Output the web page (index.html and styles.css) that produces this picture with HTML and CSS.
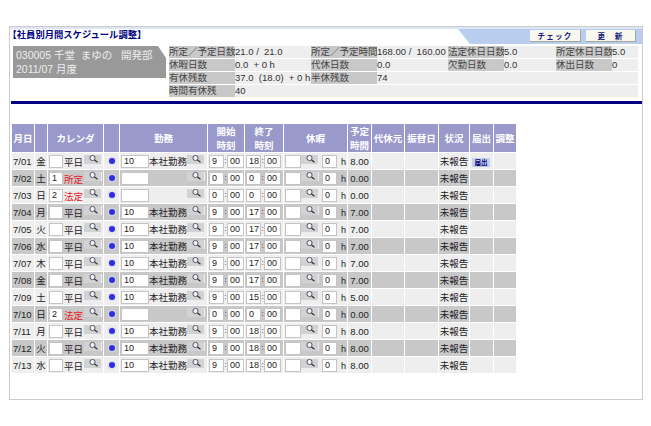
FILE: index.html
```html
<!DOCTYPE html>
<html lang="ja">
<head>
<meta charset="utf-8">
<title>社員別月間スケジュール調整</title>
<link rel="stylesheet" href="styles.css">
</head>
<body>
<svg class="defs" width="0" height="0"><symbol id="mag" viewBox="0 0 18 9"><circle cx="8.5" cy="3" r="2.6" fill="#f2f2fa" stroke="#556"/><path d="M10.5 5l3 2.3" stroke="#333" stroke-width="1.3"/></symbol></svg>
<main class="panel">
  <header class="titlebar">
    <h1 class="title">【社員別月間スケジュール調整】</h1>
    <div class="tools">
      <button class="tool">チェック</button>
      <button class="tool">更　新</button>
    </div>
  </header>
  <section class="summary">
    <div class="person">030005 千堂&nbsp;&nbsp;まゆの&nbsp;&nbsp;&nbsp;開発部<br>2011/07 月度</div>
    <div class="info">
      <span class="k">所定／予定日数</span><span class="v">21.0 /&nbsp; 21.0</span>
      <span class="k">所定／予定時間</span><span class="v">168.00 /&nbsp; 160.00</span>
      <span class="k">法定休日日数</span><span class="v">5.0</span>
      <span class="k">所定休日日数</span><span class="v">5.0</span>
      <span class="k">休暇日数</span><span class="v">0.0&nbsp; + 0 h</span>
      <span class="k">代休日数</span><span class="v">0.0</span>
      <span class="k">欠勤日数</span><span class="v">0.0</span>
      <span class="k">休出日数</span><span class="v">0</span>
      <span class="k">有休残数</span><span class="v">37.0&nbsp; (18.0)&nbsp; + 0 h</span>
      <span class="k">半休残数</span><span class="v">74</span>
      <span class="v wide4"></span>
      <span class="k">時間有休残</span><span class="v">40</span>
      <span class="v wide6"></span>
    </div>
  </section>
  <div class="rule"></div>
  <table class="sched">
    <colgroup>
      <col class="c22"><col class="c12"><col class="c55"><col class="c15"><col class="c87"><col class="c36"><col class="c38"><col class="c63"><col class="c23"><col class="c32"><col class="c33"><col class="c30"><col class="c23"><col class="c22">
    </colgroup>
    <thead>
      <tr><th>月日</th><th></th><th>カレンダ</th><th></th><th>勤務</th><th>開始<br>時刻</th><th>終了<br>時刻</th><th>休暇</th><th>予定<br>時間</th><th>代休元</th><th>振替日</th><th>状況</th><th>届出</th><th>調整</th></tr>
    </thead>
    <tbody>
      <tr><td class="day">7/01</td><td class="ctr">金</td><td><div class="f"><input class="i14" value=""><span class="cal">平日</span><button class="s"><svg><use href="#mag"/></svg></button></div></td><td><div class="dotbox"><i class="dot"></i></div></td><td><div class="f"><input class="i28" value="10"><span class="job">本社勤務</span><button class="s"><svg><use href="#mag"/></svg></button></div></td><td><div class="f"><input class="i15" value="9"><span class="c">:</span><input class="i17" value="00"></div></td><td><div class="f"><input class="i15" value="18"><span class="c">:</span><input class="i17" value="00"></div></td><td><div class="f"><input class="i16" value=""><button class="s"><svg><use href="#mag"/></svg></button><input class="i15 ml" value="0"><span class="h">h</span></div></td><td class="ctr">8.00</td><td></td><td></td><td class="ctr">未報告</td><td class="ctr"><button class="app">届出</button></td><td></td></tr>
      <tr><td class="day">7/02</td><td class="ctr">土</td><td><div class="f"><input class="i14" value="1"><span class="cal red">所定</span><button class="s"><svg><use href="#mag"/></svg></button></div></td><td><div class="dotbox"><i class="dot"></i></div></td><td><div class="f"><input class="i28" value=""><span class="job"></span><button class="s"><svg><use href="#mag"/></svg></button></div></td><td><div class="f"><input class="i15" value="0"><span class="c">:</span><input class="i17" value="00"></div></td><td><div class="f"><input class="i15" value="0"><span class="c">:</span><input class="i17" value="00"></div></td><td><div class="f"><input class="i16" value=""><button class="s"><svg><use href="#mag"/></svg></button><input class="i15 ml" value="0"><span class="h">h</span></div></td><td class="ctr">0.00</td><td></td><td></td><td class="ctr">未報告</td><td></td><td></td></tr>
      <tr><td class="day">7/03</td><td class="ctr">日</td><td><div class="f"><input class="i14" value="2"><span class="cal red">法定</span><button class="s"><svg><use href="#mag"/></svg></button></div></td><td><div class="dotbox"><i class="dot"></i></div></td><td><div class="f"><input class="i28" value=""><span class="job"></span><button class="s"><svg><use href="#mag"/></svg></button></div></td><td><div class="f"><input class="i15" value="0"><span class="c">:</span><input class="i17" value="00"></div></td><td><div class="f"><input class="i15" value="0"><span class="c">:</span><input class="i17" value="00"></div></td><td><div class="f"><input class="i16" value=""><button class="s"><svg><use href="#mag"/></svg></button><input class="i15 ml" value="0"><span class="h">h</span></div></td><td class="ctr">0.00</td><td></td><td></td><td class="ctr">未報告</td><td></td><td></td></tr>
      <tr><td class="day">7/04</td><td class="ctr">月</td><td><div class="f"><input class="i14" value=""><span class="cal">平日</span><button class="s"><svg><use href="#mag"/></svg></button></div></td><td><div class="dotbox"><i class="dot"></i></div></td><td><div class="f"><input class="i28" value="10"><span class="job">本社勤務</span><button class="s"><svg><use href="#mag"/></svg></button></div></td><td><div class="f"><input class="i15" value="9"><span class="c">:</span><input class="i17" value="00"></div></td><td><div class="f"><input class="i15" value="17"><span class="c">:</span><input class="i17" value="00"></div></td><td><div class="f"><input class="i16" value=""><button class="s"><svg><use href="#mag"/></svg></button><input class="i15 ml" value="0"><span class="h">h</span></div></td><td class="ctr">7.00</td><td></td><td></td><td class="ctr">未報告</td><td></td><td></td></tr>
      <tr><td class="day">7/05</td><td class="ctr">火</td><td><div class="f"><input class="i14" value=""><span class="cal">平日</span><button class="s"><svg><use href="#mag"/></svg></button></div></td><td><div class="dotbox"><i class="dot"></i></div></td><td><div class="f"><input class="i28" value="10"><span class="job">本社勤務</span><button class="s"><svg><use href="#mag"/></svg></button></div></td><td><div class="f"><input class="i15" value="9"><span class="c">:</span><input class="i17" value="00"></div></td><td><div class="f"><input class="i15" value="17"><span class="c">:</span><input class="i17" value="00"></div></td><td><div class="f"><input class="i16" value=""><button class="s"><svg><use href="#mag"/></svg></button><input class="i15 ml" value="0"><span class="h">h</span></div></td><td class="ctr">7.00</td><td></td><td></td><td class="ctr">未報告</td><td></td><td></td></tr>
      <tr><td class="day">7/06</td><td class="ctr">水</td><td><div class="f"><input class="i14" value=""><span class="cal">平日</span><button class="s"><svg><use href="#mag"/></svg></button></div></td><td><div class="dotbox"><i class="dot"></i></div></td><td><div class="f"><input class="i28" value="10"><span class="job">本社勤務</span><button class="s"><svg><use href="#mag"/></svg></button></div></td><td><div class="f"><input class="i15" value="9"><span class="c">:</span><input class="i17" value="00"></div></td><td><div class="f"><input class="i15" value="17"><span class="c">:</span><input class="i17" value="00"></div></td><td><div class="f"><input class="i16" value=""><button class="s"><svg><use href="#mag"/></svg></button><input class="i15 ml" value="0"><span class="h">h</span></div></td><td class="ctr">7.00</td><td></td><td></td><td class="ctr">未報告</td><td></td><td></td></tr>
      <tr><td class="day">7/07</td><td class="ctr">木</td><td><div class="f"><input class="i14" value=""><span class="cal">平日</span><button class="s"><svg><use href="#mag"/></svg></button></div></td><td><div class="dotbox"><i class="dot"></i></div></td><td><div class="f"><input class="i28" value="10"><span class="job">本社勤務</span><button class="s"><svg><use href="#mag"/></svg></button></div></td><td><div class="f"><input class="i15" value="9"><span class="c">:</span><input class="i17" value="00"></div></td><td><div class="f"><input class="i15" value="17"><span class="c">:</span><input class="i17" value="00"></div></td><td><div class="f"><input class="i16" value=""><button class="s"><svg><use href="#mag"/></svg></button><input class="i15 ml" value="0"><span class="h">h</span></div></td><td class="ctr">7.00</td><td></td><td></td><td class="ctr">未報告</td><td></td><td></td></tr>
      <tr><td class="day">7/08</td><td class="ctr">金</td><td><div class="f"><input class="i14" value=""><span class="cal">平日</span><button class="s"><svg><use href="#mag"/></svg></button></div></td><td><div class="dotbox"><i class="dot"></i></div></td><td><div class="f"><input class="i28" value="10"><span class="job">本社勤務</span><button class="s"><svg><use href="#mag"/></svg></button></div></td><td><div class="f"><input class="i15" value="9"><span class="c">:</span><input class="i17" value="00"></div></td><td><div class="f"><input class="i15" value="17"><span class="c">:</span><input class="i17" value="00"></div></td><td><div class="f"><input class="i16" value=""><button class="s"><svg><use href="#mag"/></svg></button><input class="i15 ml" value="0"><span class="h">h</span></div></td><td class="ctr">7.00</td><td></td><td></td><td class="ctr">未報告</td><td></td><td></td></tr>
      <tr><td class="day">7/09</td><td class="ctr">土</td><td><div class="f"><input class="i14" value=""><span class="cal">平日</span><button class="s"><svg><use href="#mag"/></svg></button></div></td><td><div class="dotbox"><i class="dot"></i></div></td><td><div class="f"><input class="i28" value="10"><span class="job">本社勤務</span><button class="s"><svg><use href="#mag"/></svg></button></div></td><td><div class="f"><input class="i15" value="9"><span class="c">:</span><input class="i17" value="00"></div></td><td><div class="f"><input class="i15" value="15"><span class="c">:</span><input class="i17" value="00"></div></td><td><div class="f"><input class="i16" value=""><button class="s"><svg><use href="#mag"/></svg></button><input class="i15 ml" value="0"><span class="h">h</span></div></td><td class="ctr">5.00</td><td></td><td></td><td class="ctr">未報告</td><td></td><td></td></tr>
      <tr><td class="day">7/10</td><td class="ctr">日</td><td><div class="f"><input class="i14" value="2"><span class="cal red">法定</span><button class="s"><svg><use href="#mag"/></svg></button></div></td><td><div class="dotbox"><i class="dot"></i></div></td><td><div class="f"><input class="i28" value=""><span class="job"></span><button class="s"><svg><use href="#mag"/></svg></button></div></td><td><div class="f"><input class="i15" value="0"><span class="c">:</span><input class="i17" value="00"></div></td><td><div class="f"><input class="i15" value="0"><span class="c">:</span><input class="i17" value="00"></div></td><td><div class="f"><input class="i16" value=""><button class="s"><svg><use href="#mag"/></svg></button><input class="i15 ml" value="0"><span class="h">h</span></div></td><td class="ctr">0.00</td><td></td><td></td><td class="ctr">未報告</td><td></td><td></td></tr>
      <tr><td class="day">7/11</td><td class="ctr">月</td><td><div class="f"><input class="i14" value=""><span class="cal">平日</span><button class="s"><svg><use href="#mag"/></svg></button></div></td><td><div class="dotbox"><i class="dot"></i></div></td><td><div class="f"><input class="i28" value="10"><span class="job">本社勤務</span><button class="s"><svg><use href="#mag"/></svg></button></div></td><td><div class="f"><input class="i15" value="9"><span class="c">:</span><input class="i17" value="00"></div></td><td><div class="f"><input class="i15" value="18"><span class="c">:</span><input class="i17" value="00"></div></td><td><div class="f"><input class="i16" value=""><button class="s"><svg><use href="#mag"/></svg></button><input class="i15 ml" value="0"><span class="h">h</span></div></td><td class="ctr">8.00</td><td></td><td></td><td class="ctr">未報告</td><td></td><td></td></tr>
      <tr><td class="day">7/12</td><td class="ctr">火</td><td><div class="f"><input class="i14" value=""><span class="cal">平日</span><button class="s"><svg><use href="#mag"/></svg></button></div></td><td><div class="dotbox"><i class="dot"></i></div></td><td><div class="f"><input class="i28" value="10"><span class="job">本社勤務</span><button class="s"><svg><use href="#mag"/></svg></button></div></td><td><div class="f"><input class="i15" value="9"><span class="c">:</span><input class="i17" value="00"></div></td><td><div class="f"><input class="i15" value="18"><span class="c">:</span><input class="i17" value="00"></div></td><td><div class="f"><input class="i16" value=""><button class="s"><svg><use href="#mag"/></svg></button><input class="i15 ml" value="0"><span class="h">h</span></div></td><td class="ctr">8.00</td><td></td><td></td><td class="ctr">未報告</td><td></td><td></td></tr>
      <tr><td class="day">7/13</td><td class="ctr">水</td><td><div class="f"><input class="i14" value=""><span class="cal">平日</span><button class="s"><svg><use href="#mag"/></svg></button></div></td><td><div class="dotbox"><i class="dot"></i></div></td><td><div class="f"><input class="i28" value="10"><span class="job">本社勤務</span><button class="s"><svg><use href="#mag"/></svg></button></div></td><td><div class="f"><input class="i15" value="9"><span class="c">:</span><input class="i17" value="00"></div></td><td><div class="f"><input class="i15" value="18"><span class="c">:</span><input class="i17" value="00"></div></td><td><div class="f"><input class="i16" value=""><button class="s"><svg><use href="#mag"/></svg></button><input class="i15 ml" value="0"><span class="h">h</span></div></td><td class="ctr">8.00</td><td></td><td></td><td class="ctr">未報告</td><td></td><td></td></tr>
    </tbody>
  </table>
</main>
</body>
</html>
```
FILE: styles.css
```css
* { box-sizing: border-box; }
html, body { margin: 0; padding: 0; background: #fff; }
body {
  padding: 26px 8px 0 9px;
  font-family: "Liberation Sans", "Noto Sans CJK JP", sans-serif;
  font-size: 9.5px;
  color: #222;
}
.defs { position: absolute; }
.panel {
  width: 634px;
  height: 374px;
  border: 1px solid #ccc;
  overflow: hidden;
}
.titlebar {
  display: flex;
  height: 17px;
  margin-bottom: 2px;
  border-top: 2px solid #dde4f4;
}
.title {
  flex: 1;
  margin: 0 0 0 -2.5px;
  font-size: 9.3px;
  font-weight: bold;
  line-height: 13px;
  color: #000080;
  white-space: nowrap;
}
.tools {
  display: flex;
  gap: 5px;
  width: 184px;
  padding: 1px 5px 0 72px;
  background: #b9cdee;
  clip-path: polygon(0 0, 100% 0, 100% 100%, 12px 100%);
}
.tool {
  width: 51px;
  height: 12px;
  padding: 0;
  border: 0;
  border-right: 1px solid #a5a59a;
  border-bottom: 1px solid #a5a59a;
  background: #f9f8ee;
  color: #1a1a80;
  font: bold 7.5px/11px "Noto Sans CJK JP", sans-serif;
  letter-spacing: 1.2px;
}
.tool + .tool { width: 50px; }
.summary {
  display: flex;
  padding-left: 3px;
}
.person {
  width: 153px;
  height: 32px;
  padding: 2px 0 0 3px;
  background: #999;
  color: #eee;
  font-family: "Liberation Sans", "Noto Sans CJK JP", sans-serif;
  font-size: 10.5px;
  line-height: 14px;
  white-space: nowrap;
  clip-path: polygon(0 0, 145px 0, 100% 12px, 100% 100%, 0 100%);
}
.info {
  display: grid;
  grid-template-columns: 66px 76px 66px 71px 56px 52px 56px 26px;
  grid-auto-rows: 12px;
  row-gap: 1px;
  margin-left: 3px;
  font-size: 9.5px;
  line-height: 12px;
  white-space: nowrap;
}
.k { background: #c8c8c8; color: #444; }
.v { background: #eee; color: #333; }
.wide4 { grid-column: span 4; }
.wide6 { grid-column: span 6; }
.rule {
  height: 3px;
  margin: 4px 0 0 1px;
  background: #000080;
}
.sched {
  table-layout: fixed;
  width: 506px;
  margin: 19px 0 0 1px;
  border-collapse: separate;
  border-spacing: 1px;
}
.c12 { width: 12px; } .c15 { width: 15px; } .c22 { width: 22px; } .c23 { width: 23px; }
.c30 { width: 30px; } .c32 { width: 32px; } .c33 { width: 33px; } .c36 { width: 36px; }
.c38 { width: 38px; } .c55 { width: 55px; } .c63 { width: 63px; } .c87 { width: 87px; }
.sched th {
  height: 28px;
  padding: 0;
  background: #9999cc;
  color: #fff;
  font-family: "Noto Sans CJK JP", sans-serif;
  font-size: 9.5px;
  font-weight: bold;
  line-height: 14px;
  white-space: nowrap;
}
.sched td {
  height: 16px;
  padding: 0;
  background: #eee;
  font-size: 9.5px;
  line-height: 16px;
  white-space: nowrap;
  overflow: hidden;
}
.sched tbody tr:nth-child(even) td { background: #c8c8c8; }
.sched td.ctr, .sched td.day { padding-top: 2px; line-height: 14px; }
.ctr { text-align: center; }
.sched td.day { padding-left: 1px; }
.f { display: flex; align-items: center; height: 16px; padding-left: 1px; }
input {
  height: 13px;
  margin: 0;
  padding: 0 0 0 2px;
  border: 1px solid #c4c4c4;
  border-radius: 0;
  background: #fff;
  color: #222;
  font: 9px/11px "Liberation Sans", sans-serif;
  outline: 0;
}
.i14 { width: 14px; }
.i15 { width: 15px; }
.i16 { width: 16px; }
.i17 { width: 17px; }
.i28 { width: 28px; }
.ml { margin-left: 3px; }
.c { width: 3px; font-size: 8px; text-align: center; }
.h { margin-left: 4px; padding-top: 1px; font-size: 9px; }
.cal { width: 21px; padding: 3px 0 0 1px; font-size: 9.5px; line-height: 14px; }
.red { color: #e8141c; }
.job { width: 38px; padding-top: 1px; font-size: 9.5px; line-height: 14px; }
.s {
  display: block;
  flex: none;
  width: 18px;
  height: 9px;
  margin-top: -3px;
  padding: 0;
  border: 0;
  border-right: 1px solid #eee;
  background: #d2d2d2;
}
.s svg { display: block; width: 18px; height: 9px; }
.dotbox { display: flex; align-items: center; justify-content: center; height: 16px; padding-bottom: 1px; }
.dot { display: block; width: 6px; height: 6px; border-radius: 50%; background: #2f2fdc; box-shadow: 0 0 1px 1px #d8d8f4; }
.app {
  display: block;
  width: 18px;
  height: 9px;
  margin: 0 0 0 2px;
  padding: 0;
  border: 0;
  background: #c8d0e8;
  color: #000080;
  font: bold 6.5px/9px "Noto Sans CJK JP", sans-serif;
}
```
